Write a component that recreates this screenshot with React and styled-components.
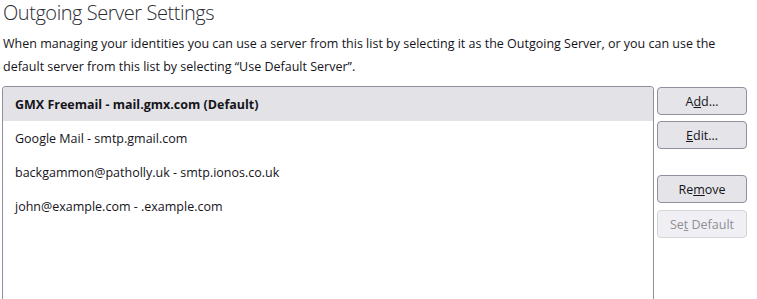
import React from "react";
import styled, { createGlobalStyle } from "styled-components";

const GlobalStyle = createGlobalStyle`
  html, body {
    margin: 0;
    padding: 0;
    background: #ffffff;
  }
  body {
    font-family: "Open Sans", "Noto Sans", sans-serif;
    color: #15141a;
    overflow: hidden;
  }
`;

const Page = styled.div`
  padding: 0 10px 0 2px;
  width: 757px;
  height: 299px;
  box-sizing: border-box;
  overflow: hidden;
`;

const Title = styled.h1`
  margin: 0;
  padding: 0 0 0 1px;
  font-size: 20px;
  font-weight: 300;
  letter-spacing: -0.45px;
  line-height: 26px;
  color: #2b2a33;
`;

const Description = styled.p`
  margin: 6px 0 8px 1px;
  font-size: 12.5px;
  line-height: 23px;
  color: #15141a;
`;

const Body = styled.div`
  display: flex;
  align-items: flex-start;
  gap: 3px;
`;

const ServerList = styled.div`
  flex: 1;
  height: 214px;
  border: 1px solid #8f8f9d;
  border-bottom: none;
  border-radius: 4px 4px 0 0;
  overflow: hidden;
`;

const ServerItem = styled.div`
  height: 34px;
  display: flex;
  align-items: center;
  padding-left: 12px;
  font-size: 12.5px;
  font-weight: ${(p) => (p.$selected ? 700 : 400)};
  background: ${(p) => (p.$selected ? "#e3e3e7" : "transparent")};
`;

const ButtonColumn = styled.div`
  width: 90px;
  display: flex;
  flex-direction: column;
  gap: 6px;
  padding-top: 1px;
`;

const Spacer = styled.div`
  height: 14px;
`;

const Button = styled.button`
  height: 28px;
  width: 90px;
  box-sizing: border-box;
  border-radius: 4px;
  margin-top: ${(p) => (p.disabled ? "1px" : "0")};
  border: 1px solid ${(p) => (p.disabled ? "#d4d4d8" : "#8f8f9d")};
  background: ${(p) => (p.disabled ? "#f0f0f4" : "#e5e5e9")};
  color: ${(p) => (p.disabled ? "#8f8f95" : "#15141a")};
  font-family: "Open Sans", "Noto Sans", sans-serif;
  font-size: 12.5px;
  padding: 0;
  u {
    text-decoration: underline;
  }
`;

const servers = [
  { label: "GMX Freemail - mail.gmx.com (Default)", selected: true },
  { label: "Google Mail - smtp.gmail.com" },
  { label: "backgammon@patholly.uk - smtp.ionos.co.uk" },
  { label: "john@example.com - .example.com" },
];

export default function App() {
  return (
    <Page>
      <GlobalStyle />
      <Title>Outgoing Server Settings</Title>
      <Description>
        When managing your identities you can use a server from this list by
        selecting it as the Outgoing Server, or you can use the default server
        from this list by selecting “Use Default Server”.
      </Description>
      <Body>
        <ServerList>
          {servers.map((s) => (
            <ServerItem key={s.label} $selected={s.selected}>
              {s.label}
            </ServerItem>
          ))}
        </ServerList>
        <ButtonColumn>
          <Button>
            A<u>d</u>d…
          </Button>
          <Button>
            <u>E</u>dit…
          </Button>
          <Spacer />
          <Button>
            Re<u>m</u>ove
          </Button>
          <Button disabled>
            Se<u>t</u> Default
          </Button>
        </ButtonColumn>
      </Body>
    </Page>
  );
}
